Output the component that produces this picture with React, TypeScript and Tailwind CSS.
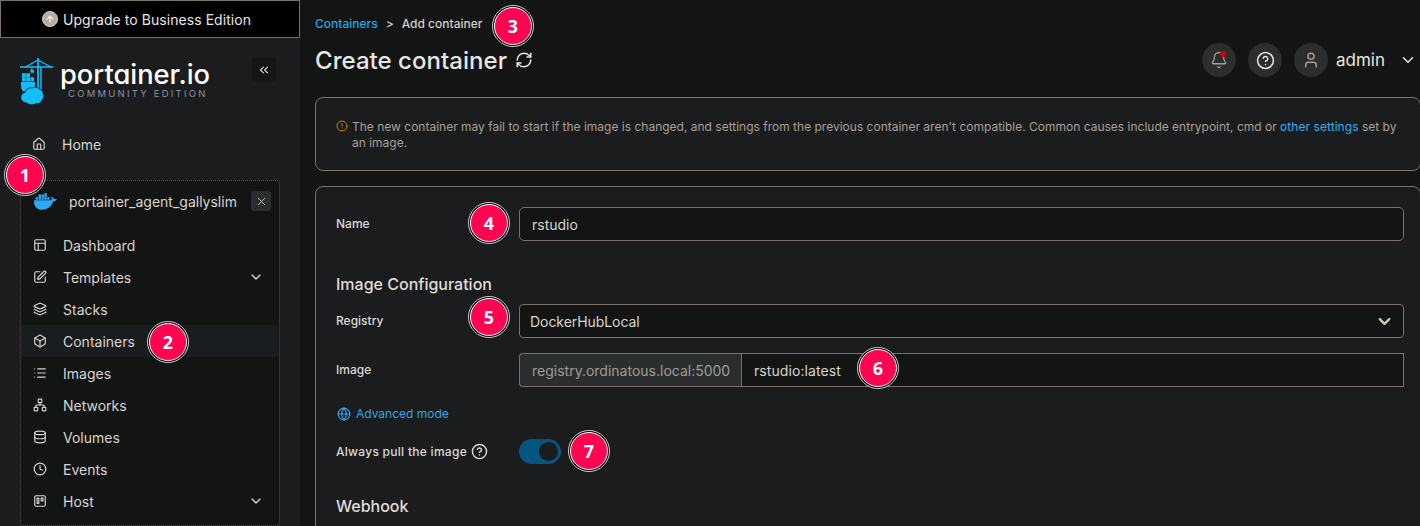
import React from "react";
import {
  Bell, Box, ChevronDown, ChevronsLeft, Clock, Database, SquarePen, Globe, HelpCircle,
  Home, Layers, List, Network, PanelsTopLeft, RefreshCw, Trello, User, X, AlertCircle, ArrowUp,
} from "lucide-react";

const LogoMark = () => (
  <svg width="34" height="48" viewBox="0 0 34 48" className="shrink-0" fill="#13bef9">
    <path d="M0 8.200h33v1.600H0zM17.200 0h1.700v31h-1.700zM20.200 9h1.500v22.500h-1.500z" />
    <path d="M18 2 5.500 9M18 2 31 9" stroke="#13bef9" strokeWidth="1.400" fill="none" />
    <path d="M11.300 9.500h1v4h-1zM10.400 11.800h3.500v3h-3.500zM2 15.300h3.800v3.600H2zM6.200 15.300H10v3.600H6.200zM2 19.300h3.800v3.900H2zM6.200 19.300H10v3.900H6.200zM10.400 19.300h3.600v3.900h-3.600z" />
    <path d="M1 24h14v9.500H3.500C1.500 32 1 29.500 1 27z" />
    <path
      d="M6 44.200C2.700 43.800 1 41.700 1.200 38.900c.1-2.500 2-4.300 4.300-4.500C6.300 31.500 8.800 29.700 12 30.400c2.500-1.700 6-1 7.500 1 2.300.2 3.700 2.200 3.100 4.300 1.300 2.200.7 4.800-.9 6-.6 2.600-2.900 3.800-5.400 3.300-2.600 2-7.500 1.800-10.300-.8z"
      stroke="#1b1c1e" strokeWidth="1.200" paintOrder="stroke"
    />
  </svg>
);

const DockerMark = () => (
  <svg width="23" height="17" viewBox="0 0 23 17" fill="#2ea8f5">
    <path d="M0 7.300h17.300c.6-.8.4-2.300-.1-3.200.9-.9 2.100.5 2.500 1.900.9-.3 2.100-.2 3 .5-.7 1.400-2 1.800-3.500 1.800C17.600 13.500 13.700 16.700 8 16.700 2.500 16.700-.3 13 0 7.300z" />
    <path d="M1.600 4.300h2.500v2.500H1.600zM4.500 4.300H7v2.500H4.500zM7.400 4.300h2.500v2.500H7.400zM10.300 4.300h2.500v2.500h-2.500zM13.200 4.300h2.300v2.500h-2.300zM4.500 1.600H7v2.300H4.500zM7.400 1.600h2.500v2.300H7.400zM10.300 1.600h2.500v2.300h-2.500zM10.300-.7h2.500v1.900h-2.500z" />
  </svg>
);

const nav = [
  { label: "Dashboard", Icon: PanelsTopLeft },
  { label: "Templates", Icon: SquarePen, more: true },
  { label: "Stacks", Icon: Layers },
  { label: "Containers", Icon: Box, active: true },
  { label: "Images", Icon: List },
  { label: "Networks", Icon: Network },
  { label: "Volumes", Icon: Database },
  { label: "Events", Icon: Clock },
  { label: "Host", Icon: Trello, more: true },
];

function Step({ n, at }: { n: number; at: string }) {
  return (
    <div className={`absolute flex size-[42px] items-center justify-center rounded-full border border-[#d0d0d0] bg-black p-px ${at}`}>
      <div className="flex size-[38px] shrink-0 items-center justify-center rounded-full border border-white bg-[#ff0450] font-['Open_Sans'] text-[18px] font-bold leading-none text-white">
        {n}
      </div>
    </div>
  );
}

function Sidebar() {
  return (
    <aside className="flex w-[300px] shrink-0 flex-col bg-[#1b1c1e]">
      <div className="flex h-[38px] shrink-0 items-center justify-center gap-[5px] border border-[#7a7167] bg-black pr-[7px] text-[14px] tracking-[0.060px] text-[#e8e6e3]">
        <span className="flex size-4 items-center justify-center rounded-full border border-[#d8d4cf] bg-[#b5ada1] text-white">
          <ArrowUp size={10} strokeWidth={2.5} />
        </span>
        Upgrade to Business Edition
      </div>
      <div className="flex h-[90px] shrink-0 items-start pl-5 pt-5">
        <LogoMark />
        <div className="ml-[6px] w-[160px]">
          <div className="h-[30px] whitespace-nowrap text-[27.300px] font-medium leading-[33px] text-white [font-feature-settings:'cv11']">portainer.io</div>
          <div className="mt-[2px] whitespace-nowrap pl-2 text-[9.500px] leading-[8px] tracking-[2.220px] text-[#8b90a5]">COMMUNITY EDITION</div>
        </div>
        <div className="ml-8 flex size-6 items-center justify-center rounded bg-[#131516] text-[#d8d4cf]">
          <ChevronsLeft size={14} />
        </div>
      </div>
      <div className="flex h-[32px] items-center pl-8 text-[14px] text-[#d8d4cf]">
        <Home size={14} />
        <span className="ml-4">Home</span>
      </div>
      <div className="ml-5 mt-[20px] h-[346px] w-[260px] shrink-0 rounded-[3px] border border-dotted border-[#57524b] bg-[#131514] text-[14px] text-[#d8d4cf]">
        <div className="flex h-[40px] items-center pl-[13px]">
          <DockerMark />
          <span className="ml-[12px] w-[182px]">portainer_agent_gallyslim</span>
          <span className="flex size-5 items-center justify-center rounded-[3px] bg-[#2b2e30]"><X size={13} strokeWidth={1.600} /></span>
        </div>
        <div className="mt-2">
          {nav.map(({ label, Icon, more, active }) => (
            <div key={label} className={`flex h-8 items-center rounded pl-3 pr-[15px] ${active ? "bg-[#1a1d1f]" : ""}`}>
              <Icon size={14} />
              <span className="ml-4 flex-1">{label}</span>
              {more && <ChevronDown size={16} />}
            </div>
          ))}
        </div>
      </div>
    </aside>
  );
}

const Label = ({ children }: { children: React.ReactNode }) => (
  <div className="flex w-[183px] shrink-0 items-center text-[12px] font-medium text-[#dcd9d4]">{children}</div>
);

export default function App() {
  return (
    <div className="relative flex h-[526px] w-[1420px] overflow-hidden bg-[#131514] font-[Inter,sans-serif]">
      <Sidebar />
      <main className="min-w-0 flex-1 pl-[15px]">
        <div className="flex h-[97px] justify-between">
          <div className="pt-[15px]">
            <div className="flex h-[18px] items-center gap-2 text-[12px] font-medium text-[#d3cfc9]">
              <span className="text-[#26a5e4]">Containers</span><span>&gt;</span><span>Add container</span>
            </div>
            <div className="mt-3 flex h-8 items-center gap-[8px] text-[24px] font-medium tracking-[0.040px] text-[#e8e6e3]">
              Create container <RefreshCw size={18} className="-mt-[2px]" />
            </div>
          </div>
          <div className="flex h-[34px] pt-[43px] text-[#e8e6e3]">
            <div className="relative flex size-[34px] items-center justify-center rounded-full bg-[#2b2d2e] text-[#a69d91]">
              <Bell size={18} strokeWidth={1.700} />
              <span className="absolute left-[18px] top-2 size-[6px] rounded-full bg-[#d40000]" />
            </div>
            <div className="ml-3 flex size-[34px] items-center justify-center rounded-full bg-[#2b2d2e]"><HelpCircle size={19} strokeWidth={1.900} /></div>
            <div className="ml-3 flex size-[34px] items-center justify-center rounded-full bg-[#2b2d2e] text-[#a69d91]"><User size={18} /></div>
            <div className="ml-2 flex h-[34px] w-[63px] items-center pt-[2px] text-[17px]">admin</div>
            <div className="flex h-[34px] items-center pr-[3px]"><ChevronDown size={18} /></div>
          </div>
        </div>
        <section className="flex h-[74px] w-[1106px] rounded-lg border border-[#7a7167] bg-[#1b1c1e] pl-5 pt-[21px] text-[12px] leading-4 text-[#a8a095]">
          <AlertCircle size={12} className="mr-1 mt-[1px] shrink-0 text-[#d08218]" />
          <p className="w-[1060px]">
            The new container may fail to start if the image is changed, and settings from the previous container aren't compatible. Common causes include entrypoint, cmd or <span className="tracking-[0.060px] text-[#36aaf0]">other settings</span> set by<br />an image.
          </p>
        </section>
        <section className="mt-[15px] h-[400px] w-[1106px] rounded-lg border border-[#7a7167] bg-[#1b1c1e] pl-5 pt-5 text-[14px] text-[#d8d4cf]">
          <div className="flex h-[34px]">
            <Label>Name</Label>
            <div className="flex w-[885px] items-center rounded-[5px] border border-[#7a7167] bg-[#131514] px-3">rstudio</div>
          </div>
          <h2 className="mt-[31px] h-[24px] text-[16px] font-medium leading-[24px] text-[#e0ddd8]">Image Configuration</h2>
          <div className="mt-[8px] flex h-[34px]">
            <Label>Registry</Label>
            <div className="flex w-[885px] items-center justify-between rounded-[4px] border border-[#7a7167] bg-[#131514] pl-[10px] pr-[9px]">
              <span className="tracking-[-0.060px]">DockerHubLocal</span>
              <ChevronDown size={19} strokeWidth={3} className="text-[#cdc8c2]" />
            </div>
          </div>
          <div className="mt-[15px] flex h-[34px]">
            <Label>Image</Label>
            <div className="flex w-[885px]">
              <div className="flex w-[222px] items-center rounded-l-[4px] border border-r-0 border-[#7a7167] bg-[#2b2e2f] pl-3 text-[#a39b90]">registry.ordinatous.local:5000</div>
              <div className="flex flex-1 items-center border border-[#7a7167] bg-[#131514] pl-3 tracking-[0.080px]">rstudio:latest</div>
            </div>
          </div>
          <div className="mt-[18px] flex h-[18px] items-center gap-[5px] pl-px text-[12px] text-[#36a3e4]"><Globe size={14} />Advanced mode</div>
          <div className="mt-[16px] flex h-[25px]">
            <Label><span className="tracking-[0.280px]">Always pull the image</span><HelpCircle size={17} className="ml-[4px]" /></Label>
            <div className="flex w-[42px] items-center justify-end rounded-full bg-[#045582] pr-[3px]"><div className="size-[19px] rounded-full bg-[#1b1c1e]" /></div>
          </div>
          <h2 className="mt-[30px] h-[24px] text-[16px] font-medium leading-[24px] text-[#e0ddd8]">Webhook</h2>
        </section>
      </main>
      <Step n={1} at="left-[4px] top-[154px]" />
      <Step n={2} at="left-[147px] top-[321px]" />
      <Step n={3} at="left-[492px] top-[5px]" />
      <Step n={4} at="left-[468px] top-[202px]" />
      <Step n={5} at="left-[468px] top-[296px]" />
      <Step n={6} at="left-[857px] top-[347px]" />
      <Step n={7} at="left-[568px] top-[430px]" />
    </div>
  );
}
